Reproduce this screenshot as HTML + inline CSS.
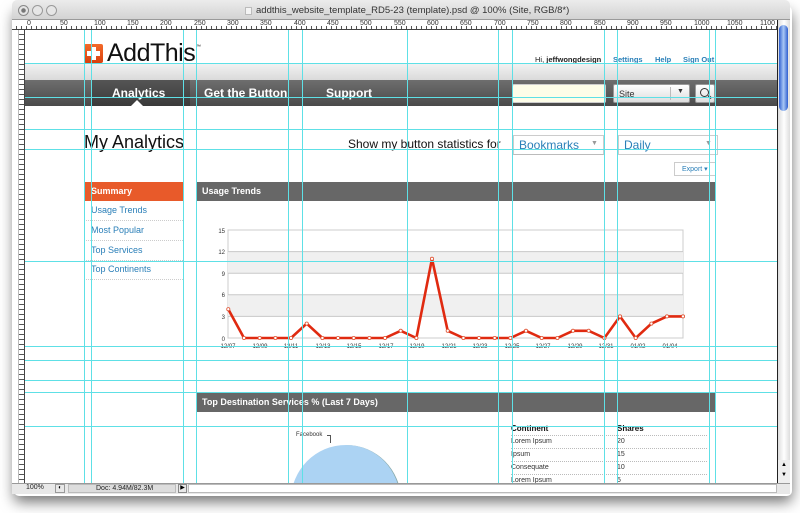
<!DOCTYPE html>
<html style="overflow:hidden"><head><meta charset="utf-8"><style>
*{margin:0;padding:0;box-sizing:border-box}
html,body{width:800px;height:513px;overflow:hidden}
body{background:#fff;position:relative;font-family:"Liberation Sans",Arial,sans-serif}
.a{position:absolute}
.lnk{color:#2a7fb8}
</style></head><body>
<div class="a" style="left:14px;top:6px;width:778px;height:490px;box-shadow:0 6px 14px rgba(0,0,0,.55);border-radius:5px"></div>
<div class="a" style="left:12px;top:0;width:778px;height:20px;background:linear-gradient(#ececec,#d3d3d3);border-radius:5px 5px 0 0;border-bottom:1px solid #9a9a9a"></div>
<div class="a" style="left:18px;top:5px;width:11px;height:11px;border-radius:50%;border:1px solid #888;background:radial-gradient(#777 30%,#e4e4e4 40%)"></div>
<div class="a" style="left:32px;top:5px;width:11px;height:11px;border-radius:50%;border:1px solid #999;background:#e6e6e6"></div>
<div class="a" style="left:46px;top:5px;width:11px;height:11px;border-radius:50%;border:1px solid #999;background:#e6e6e6"></div>
<div class="a" style="left:245px;top:7px;width:7px;height:8px;background:#f4f4f4;border:1px solid #bbb"></div>
<div class="a" style="left:256px;top:5px;font-size:9.5px;color:#333;white-space:nowrap">addthis_website_template_RD5-23 (template).psd @ 100% (Site, RGB/8*)</div>
<div class="a" style="left:12px;top:20px;width:766px;height:10px;background:repeating-linear-gradient(90deg,#fff 0 4px,#555 4px 5px);border-bottom:1px solid #444"></div>
<div class="a" style="left:12px;top:20px;width:766px;height:6px;background:#fff"></div>
<div class="a" style="left:12px;top:20px;width:766px;height:10px;font-size:7px;color:#333;white-space:nowrap">
<span class="a" style="left:15px">0</span><span class="a" style="left:48px">50</span><span class="a" style="left:82px">100</span><span class="a" style="left:115px">150</span><span class="a" style="left:148px">200</span><span class="a" style="left:182px">250</span><span class="a" style="left:215px">300</span><span class="a" style="left:248px">350</span><span class="a" style="left:282px">400</span><span class="a" style="left:315px">450</span><span class="a" style="left:348px">500</span><span class="a" style="left:382px">550</span><span class="a" style="left:415px">600</span><span class="a" style="left:448px">650</span><span class="a" style="left:482px">700</span><span class="a" style="left:515px">750</span><span class="a" style="left:548px">800</span><span class="a" style="left:582px">850</span><span class="a" style="left:615px">900</span><span class="a" style="left:648px">950</span><span class="a" style="left:682px">1000</span><span class="a" style="left:715px">1050</span><span class="a" style="left:748px">1100</span></div>
<div class="a" style="left:12px;top:30px;width:13px;height:453px;background:repeating-linear-gradient(#fff 0 4px,#555 4px 5px);border-right:1px solid #444"></div>
<div class="a" style="left:12px;top:30px;width:7px;height:453px;background:#fff;border-right:1px solid #bbb"></div>
<div class="a" style="left:777px;top:20px;width:13px;height:463px;background:linear-gradient(90deg,#ddd,#fff,#ddd);border-left:1px solid #222"></div>
<div class="a" style="left:779px;top:25px;width:9px;height:86px;border-radius:5px;background:linear-gradient(90deg,#2f5fd0,#a9c8f5,#2f5fd0)"></div>
<div class="a" style="left:778px;top:460px;width:12px;height:23px;background:#eee;font-size:6px;text-align:center;line-height:10px">▲<br>▼</div>
<div class="a" style="left:12px;top:483px;width:778px;height:11px;background:#e8e8e8;border-top:1px solid #999"></div>
<div class="a" style="left:26px;top:484px;font-size:7px;color:#222">100%</div>
<div class="a" style="left:55px;top:484px;width:10px;height:9px;border:1px solid #999;font-size:6px;text-align:center">◐</div>
<div class="a" style="left:68px;top:484px;width:108px;height:9px;background:#ddd;border:1px solid #bbb;font-size:7px;color:#222;padding-left:27px;line-height:7px">Doc: 4.94M/82.3M</div>
<div class="a" style="left:178px;top:484px;width:9px;height:9px;border:1px solid #888;font-size:6px;line-height:7px;text-align:center">▶</div>
<div class="a" style="left:188px;top:484px;width:589px;height:9px;background:#fff;border:1px solid #bbb"></div>

<div class="a" style="left:25px;top:30px;width:752px;height:453px;background:#fff;overflow:hidden">
 <div class="a" style="left:0;top:33px;width:752px;height:17px;background:linear-gradient(#f3f3f3,#dadada)"></div>
 <div class="a" style="left:0;top:50px;width:752px;height:26px;background:linear-gradient(#6e6e6e,#4a4a4a)"></div>
 <div class="a" style="left:66px;top:50px;width:99px;height:26px;background:linear-gradient(#555,#3a3a3a)"></div>
 <div class="a" style="left:106px;top:70px;width:0;height:0;border-left:6px solid transparent;border-right:6px solid transparent;border-bottom:6px solid #fff"></div>
 <div class="a" style="left:87px;top:56px;font-size:12px;font-weight:bold;color:#fff">Analytics</div>
 <div class="a" style="left:179px;top:56px;font-size:12px;font-weight:bold;color:#fff">Get the Button</div>
 <div class="a" style="left:301px;top:56px;font-size:12px;font-weight:bold;color:#fff">Support</div>
 <div class="a" style="left:59px;top:14px;width:19px;height:19px;background:linear-gradient(#f36a2a,#d9400e);border-radius:2px"></div>
 <div class="a" style="left:66px;top:17px;width:5px;height:13px;background:#fff"></div>
 <div class="a" style="left:62px;top:21px;width:13px;height:5px;background:#fff"></div>
 <div class="a" style="left:82px;top:9px;font-size:25px;color:#111;letter-spacing:-0.5px">AddThis</div>
 <div class="a" style="left:171px;top:14px;font-size:5px;color:#111">™</div>
 <div class="a" style="left:510px;top:25px;font-size:7.5px;color:#222;white-space:nowrap">Hi, <b>jeffwongdesign</b></div>
 <div class="a lnk" style="left:588px;top:25px;font-size:7.5px;font-weight:bold">Settings</div>
 <div class="a lnk" style="left:630px;top:25px;font-size:7.5px;font-weight:bold">Help</div>
 <div class="a lnk" style="left:658px;top:25px;font-size:7.5px;font-weight:bold;white-space:nowrap">Sign Out</div>
 <div class="a" style="left:487px;top:54px;width:94px;height:19px;background:#fdfde8;border:1px solid #ccc;border-radius:2px"></div>
 <div class="a" style="left:588px;top:54px;width:77px;height:19px;background:linear-gradient(#fff,#ddd);border:1px solid #999;border-radius:2px;font-size:9px;padding:4px 0 0 5px;color:#333">Site</div>
 <div class="a" style="left:645px;top:57px;width:1px;height:13px;background:#bbb"></div>
 <div class="a" style="left:652px;top:58px;font-size:7px;color:#333">▼</div>
 <div class="a" style="left:670px;top:54px;width:20px;height:19px;background:linear-gradient(#fff,#ddd);border:1px solid #999;border-radius:2px"></div>
 <div class="a" style="left:675px;top:58px;width:9px;height:9px;border:1.5px solid #333;border-radius:50%"></div>
 <div class="a" style="left:683px;top:66px;width:4px;height:1.5px;background:#333;transform:rotate(45deg)"></div>
 <div class="a" style="left:59px;top:102px;font-size:18px;color:#111">My Analytics</div>
 <div class="a" style="left:323px;top:107px;font-size:12px;color:#111;white-space:nowrap">Show my button statistics for</div>
 <div class="a" style="left:488px;top:105px;width:91px;height:20px;border:1px solid #ccc;border-bottom-color:#bbb;font-size:12px;color:#2a7fb8;padding:2px 0 0 5px">Bookmarks</div>
 <div class="a" style="left:566px;top:110px;font-size:7px;color:#999">▼</div>
 <div class="a" style="left:593px;top:105px;width:100px;height:20px;border:1px solid #ccc;font-size:12px;color:#2a7fb8;padding:2px 0 0 5px">Daily</div>
 <div class="a" style="left:680px;top:110px;font-size:7px;color:#999">▼</div>
 <div class="a" style="left:649px;top:132px;width:42px;height:14px;border:1px solid #ccc;font-size:7px;color:#2a7fb8;padding:2px 0 0 7px">Export ▾</div>
 <div class="a" style="left:59px;top:152px;width:99px;height:19px;background:#e85a2a;font-size:9px;font-weight:bold;color:#fff;padding:4px 0 0 7px">Summary</div>
 <div class="a lnk" style="left:66px;top:175px;font-size:9px">Usage Trends</div>
 <div class="a" style="left:59px;top:190px;width:99px;border-top:1px dotted #ccc"></div>
 <div class="a lnk" style="left:66px;top:195px;font-size:9px">Most Popular</div>
 <div class="a" style="left:59px;top:210px;width:99px;border-top:1px dotted #ccc"></div>
 <div class="a lnk" style="left:66px;top:215px;font-size:9px">Top Services</div>
 <div class="a" style="left:59px;top:230px;width:99px;border-top:1px dotted #ccc"></div>
 <div class="a lnk" style="left:66px;top:234px;font-size:9px">Top Continents</div>
 <div class="a" style="left:59px;top:249px;width:99px;border-top:1px dotted #ccc"></div>
 <div class="a" style="left:172px;top:152px;width:519px;height:19px;background:#676767;font-size:9px;font-weight:bold;color:#fff;padding:4px 0 0 5px">Usage Trends</div>
 <div class="a" style="left:172px;top:363px;width:519px;height:19px;background:#676767;font-size:9px;font-weight:bold;color:#fff;padding:4px 0 0 5px">Top Destination Services % (Last 7 Days)</div>
 <div class="a" style="left:266px;top:415px;width:110px;height:110px;border-radius:50%;background:#acd3f3;border-right:1px solid #8aa"></div>
 <div class="a" style="left:271px;top:402px;font-size:6px;color:#333">Facebook</div>
 <div class="a" style="left:302px;top:405px;width:4px;height:8px;border-top:1px solid #555;border-right:1px solid #555"></div>
 <div class="a" style="left:486px;top:394px;font-size:8px;font-weight:bold;color:#111">Continent</div>
 <div class="a" style="left:592px;top:394px;font-size:8px;font-weight:bold;color:#111">Shares</div>
 <div class="a" style="left:486px;top:405px;width:196px;border-top:1px dotted #bbb"></div>
 <div class="a" style="left:486px;top:408px;font-size:7px;color:#333">Lorem Ipsum</div><div class="a" style="left:592px;top:408px;font-size:7px;color:#333">20</div>
 <div class="a" style="left:486px;top:418px;width:196px;border-top:1px dotted #bbb"></div>
 <div class="a" style="left:486px;top:421px;font-size:7px;color:#333">Ipsum</div><div class="a" style="left:592px;top:421px;font-size:7px;color:#333">15</div>
 <div class="a" style="left:486px;top:431px;width:196px;border-top:1px dotted #bbb"></div>
 <div class="a" style="left:486px;top:434px;font-size:7px;color:#333">Consequate</div><div class="a" style="left:592px;top:434px;font-size:7px;color:#333">10</div>
 <div class="a" style="left:486px;top:444px;width:196px;border-top:1px dotted #bbb"></div>
 <div class="a" style="left:486px;top:447px;font-size:7px;color:#333">Lorem Ipsum</div><div class="a" style="left:592px;top:447px;font-size:7px;color:#333">5</div>
</div>

<svg class="a" style="left:0;top:0" width="800" height="513" viewBox="0 0 800 513">
 <rect x="228" y="230" width="455" height="108" fill="#fff" stroke="#ccc"/>
 <rect x="228" y="251.6" width="455" height="21.6" fill="#f0f0f0"/>
 <rect x="228" y="294.8" width="455" height="21.6" fill="#f0f0f0"/>
 <g stroke="#c8c8c8"><line x1="228" x2="683" y1="251.6" y2="251.6"/><line x1="228" x2="683" y1="273.2" y2="273.2"/><line x1="228" x2="683" y1="294.8" y2="294.8"/><line x1="228" x2="683" y1="316.4" y2="316.4"/></g>
 <g font-family="Liberation Sans,sans-serif" font-size="6" fill="#333" text-anchor="end">
  <text x="225" y="233">15</text><text x="225" y="254">12</text><text x="225" y="276">9</text><text x="225" y="297">6</text><text x="225" y="319">3</text><text x="225" y="341">0</text></g>
 <g font-family="Liberation Sans,sans-serif" font-size="6" fill="#333" text-anchor="middle">
  <text x="228" y="348">12/07</text><text x="260" y="348">12/09</text><text x="291" y="348">12/11</text><text x="323" y="348">12/13</text><text x="354" y="348">12/15</text><text x="386" y="348">12/17</text><text x="417" y="348">12/19</text><text x="449" y="348">12/21</text><text x="480" y="348">12/23</text><text x="512" y="348">12/25</text><text x="543" y="348">12/27</text><text x="575" y="348">12/29</text><text x="606" y="348">12/31</text><text x="638" y="348">01/02</text><text x="670" y="348">01/04</text></g>
 <polyline fill="none" stroke="#e02a10" stroke-width="2.6" stroke-linejoin="round" points="228.3,309.2 244,338 259.7,338 275.4,338 291,338 306.7,323.6 322.4,338 338,338 353.7,338 369.4,338 385,338 400.7,330.8 416.4,338 432,258.8 447.7,330.8 463.4,338 479,338 494.7,338 510.4,338 526,330.8 541.7,338 557.4,338 573,330.8 588.7,330.8 604.4,338 620,316.4 635.7,338 651.4,323.6 667,316.4 683,316.4"/>
 <g fill="#fff" stroke="#e05030" stroke-width=".8">
  <circle cx="228.3" cy="309.2" r="1.6"/><circle cx="244" cy="338" r="1.6"/><circle cx="259.7" cy="338" r="1.6"/><circle cx="275.4" cy="338" r="1.6"/><circle cx="291" cy="338" r="1.6"/><circle cx="306.7" cy="323.6" r="1.6"/><circle cx="322.4" cy="338" r="1.6"/><circle cx="338" cy="338" r="1.6"/><circle cx="353.7" cy="338" r="1.6"/><circle cx="369.4" cy="338" r="1.6"/><circle cx="385" cy="338" r="1.6"/><circle cx="400.7" cy="330.8" r="1.6"/><circle cx="416.4" cy="338" r="1.6"/><circle cx="432" cy="258.8" r="1.6"/><circle cx="447.7" cy="330.8" r="1.6"/><circle cx="463.4" cy="338" r="1.6"/><circle cx="479" cy="338" r="1.6"/><circle cx="494.7" cy="338" r="1.6"/><circle cx="510.4" cy="338" r="1.6"/><circle cx="526" cy="330.8" r="1.6"/><circle cx="541.7" cy="338" r="1.6"/><circle cx="557.4" cy="338" r="1.6"/><circle cx="573" cy="330.8" r="1.6"/><circle cx="588.7" cy="330.8" r="1.6"/><circle cx="604.4" cy="338" r="1.6"/><circle cx="620" cy="316.4" r="1.6"/><circle cx="635.7" cy="338" r="1.6"/><circle cx="651.4" cy="323.6" r="1.6"/><circle cx="667" cy="316.4" r="1.6"/><circle cx="683" cy="316.4" r="1.6"/></g>
 <g stroke="#5ee0e6" stroke-width="1">
  <line x1="84.5" x2="84.5" y1="30" y2="483"/><line x1="91.5" x2="91.5" y1="30" y2="483"/><line x1="183.5" x2="183.5" y1="30" y2="483"/><line x1="196.5" x2="196.5" y1="30" y2="483"/><line x1="288.5" x2="288.5" y1="30" y2="483"/><line x1="302.5" x2="302.5" y1="30" y2="483"/><line x1="407.5" x2="407.5" y1="30" y2="483"/><line x1="498.5" x2="498.5" y1="30" y2="483"/><line x1="512.5" x2="512.5" y1="30" y2="483"/><line x1="604.5" x2="604.5" y1="30" y2="483"/><line x1="617.5" x2="617.5" y1="30" y2="483"/><line x1="709.5" x2="709.5" y1="30" y2="483"/><line x1="715.5" x2="715.5" y1="30" y2="483"/>
  <line x1="25" x2="777" y1="63.5" y2="63.5"/><line x1="25" x2="777" y1="97.5" y2="97.5"/><line x1="25" x2="777" y1="129.5" y2="129.5"/><line x1="25" x2="777" y1="149.5" y2="149.5"/><line x1="25" x2="777" y1="261.5" y2="261.5"/><line x1="25" x2="777" y1="346.5" y2="346.5"/><line x1="25" x2="777" y1="360.5" y2="360.5"/><line x1="25" x2="777" y1="380.5" y2="380.5"/><line x1="25" x2="777" y1="392.5" y2="392.5"/><line x1="25" x2="777" y1="426.5" y2="426.5"/>
 </g>
</svg>
</body></html>
